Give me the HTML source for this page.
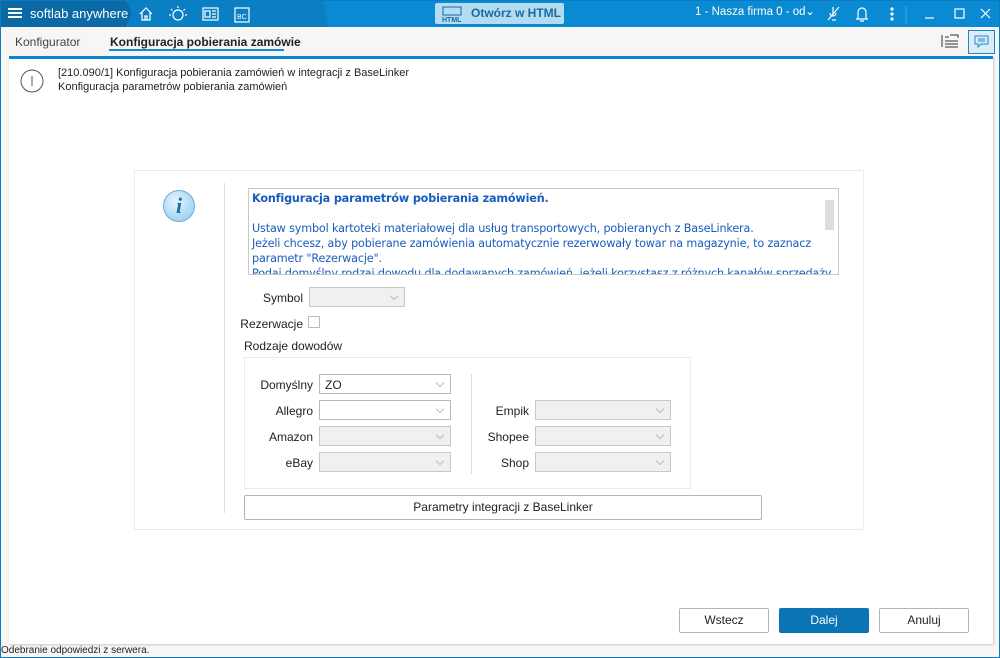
<!DOCTYPE html>
<html><head><meta charset="utf-8"><style>
*{box-sizing:border-box;margin:0;padding:0}
body{width:1000px;height:658px;overflow:hidden;background:#f7f6f4;font-family:"Liberation Sans",sans-serif;font-size:12px;color:#222;position:relative}
.abs{position:absolute}
.top{left:0;top:0;width:1000px;height:27px;background:#0a8ad2}
.topl{left:0;top:0;width:132px;height:27px;background:#0b6aa6;clip-path:polygon(0 0,126px 0,132px 13px,126px 27px,0 27px)}
.topm{left:128px;top:0;width:200px;height:27px;background:#0a7fc4;clip-path:polygon(0 0,195px 0,200px 27px,0 27px)}
.w{color:#fff}
.sel{background:#fff;border:1px solid #b8b8b8;height:20px}
.sel.d{background:#f0f0f0;border-color:#c8c8c8}
.sel:after{content:"";position:absolute;right:7px;top:5px;width:5px;height:5px;border-right:1px solid #bbb;border-bottom:1px solid #bbb;transform:rotate(45deg)}
.lbl{text-align:right;font-size:12px}
.btn{border:1px solid #b5b5b5;background:#fff;border-radius:2px;text-align:center;line-height:23px;font-size:12px}
</style></head><body>
<div class="abs top"></div>
<div class="abs topm"></div>
<div class="abs topl"></div>
<div class="abs" style="left:8px;top:8px;width:14px;height:2px;background:#fff;box-shadow:0 4px 0 #fff,0 8px 0 #fff"></div>
<div class="abs w" style="left:30px;top:6px;font-size:13px">softlab anywhere</div>
<svg class="abs" style="left:138px;top:5px" width="120" height="18" fill="none" stroke="#fff" stroke-width="1.2">
<path d="M2 9 L8 3 L14 9 M4 7 V15 H12 V7 M7 15 V11 H9 V15"/>
<circle cx="40" cy="10" r="5"/><path d="M40 1v2M33 4l1.5 1.5M47 4l-1.5 1.5M31 10h2M47 10h2"/>
<rect x="65" y="3" width="15" height="12"/><rect x="67" y="6" width="5" height="6"/><path d="M74 6h4M74 9h4M74 12h4"/>
<rect x="97" y="3" width="14" height="14"/><text x="99" y="14" font-size="7" fill="#fff" stroke="none" font-family="Liberation Sans">BC</text>
</svg>
<div class="abs" style="left:435px;top:3px;width:129px;height:21px;background:#b3dcf3;border-radius:2px"></div>
<svg class="abs" style="left:441px;top:5px" width="22" height="18" fill="none" stroke="#1a6aa0"><rect x="2" y="2" width="18" height="8"/><text x="1" y="17" font-size="7" fill="#1a6aa0" stroke="none" font-weight="bold" font-family="Liberation Sans">HTML</text></svg>
<div class="abs" style="left:471px;top:6px;color:#1a6aa0;font-size:12px;font-weight:bold">Otwórz w HTML</div>
<div class="abs w" style="left:695px;top:6px;font-size:11.5px">1 - Nasza firma 0 - od</div>
<div class="abs w" style="left:805px;top:4px;font-size:12px">⌄</div>
<svg class="abs" style="left:825px;top:4px" width="170" height="20" fill="none" stroke="#fff" stroke-width="1.2">
<path d="M8 3v8a3 3 0 0 0 0 0M5 9a3 3 0 0 0 6 0M3 16L14 3M7 16h4"/>
<path d="M31 15h12M33 15V8a4 4 0 0 1 8 0v7M35 17h4"/>
<circle cx="67" cy="5" r="1" fill="#fff"/><circle cx="67" cy="10" r="1" fill="#fff"/><circle cx="67" cy="15" r="1" fill="#fff"/>
<path d="M81 2v18" stroke="#3aa0dc"/><path d="M100 14h9"/><rect x="130" y="5" width="9" height="9"/><path d="M156 5l9 9M165 5l-9 9"/>
</svg>
<div class="abs" style="left:15px;top:35px;color:#444">Konfigurator</div>
<div class="abs" style="left:110px;top:35px;font-weight:bold;color:#222">Konfiguracja pobierania zamówie</div>
<div class="abs" style="left:109px;top:49px;width:175px;height:2px;background:#1a86cc"></div>
<svg class="abs" style="left:940px;top:33px" width="20" height="16" fill="none" stroke="#333"><path d="M2 2v12M5 4h4M5 8h13M5 11h13M5 14h13M10 2h8v3"/></svg>
<div class="abs" style="left:968px;top:30px;width:27px;height:24px;border:1px solid #1a86cc;background:#dcedf8"></div>
<svg class="abs" style="left:974px;top:35px" width="16" height="14" fill="none" stroke="#1a86cc"><path d="M1 1h13v8H7l-3 3V9H1z M4 4h7M4 6h7"/></svg>
<div class="abs" style="left:9px;top:56px;width:984px;height:588px;background:#fff;border-top:3px solid #0a86d0;box-shadow:1px 1px 2px #ccc"></div>
<svg class="abs" style="left:19px;top:68px" width="26" height="26" fill="none" stroke="#555"><circle cx="13" cy="13" r="11"/><path d="M13 8v10"/></svg>
<div class="abs" style="left:58px;top:66px;font-size:11px;line-height:14px">[210.090/1] Konfiguracja pobierania zamówień w integracji z BaseLinker<br>Konfiguracja parametrów pobierania zamówień</div>
<div class="abs" style="left:134px;top:170px;width:730px;height:360px;border:1px solid #ebebeb"></div>
<div class="abs" style="left:224px;top:183px;width:1px;height:330px;background:#ddd"></div>
<div class="abs" style="left:163px;top:190px;width:32px;height:32px;border-radius:50%;background:radial-gradient(circle at 40% 35%,#e4f4fd,#8cc8ec);border:1px solid #6aaedc;color:#1d6fa8;font:italic bold 22px 'Liberation Serif',serif;text-align:center;line-height:30px">i</div>
<div class="abs" style="left:248px;top:188px;width:591px;height:87px;border:1px solid #c8c8c8;overflow:hidden;color:#1a5cbc;line-height:15px;padding:2px 3px;font-family:'DejaVu Sans',sans-serif;letter-spacing:-0.15px;font-size:11.2px;white-space:nowrap">
<b>Konfiguracja parametrów pobierania zamówień.</b><br><br>Ustaw symbol kartoteki materiałowej dla usług transportowych, pobieranych z BaseLinkera.<br>Jeżeli chcesz, aby pobierane zamówienia automatycznie rezerwowały towar na magazynie, to zaznacz<br>parametr "Rezerwacje".<br>Podaj domyślny rodzaj dowodu dla dodawanych zamówień, jeżeli korzystasz z różnych kanałów sprzedaży</div>
<div class="abs" style="left:825px;top:200px;width:9px;height:30px;background:#ddd"></div>
<div class="abs lbl" style="left:240px;top:291px;width:63px">Symbol</div>
<div class="abs sel d" style="left:309px;top:287px;width:96px"></div>
<div class="abs lbl" style="left:230px;top:317px;width:73px">Rezerwacje</div>
<div class="abs" style="left:308px;top:316px;width:12px;height:12px;border:1px solid #bbb"></div>
<div class="abs" style="left:244px;top:339px">Rodzaje dowodów</div>
<div class="abs" style="left:244px;top:357px;width:447px;height:132px;border:1px solid #ebebeb"></div>
<div class="abs" style="left:471px;top:374px;width:1px;height:100px;background:#ddd"></div>
<div class="abs lbl" style="left:240px;top:378px;width:73px">Domyślny</div><div class="abs sel" style="left:319px;top:374px;width:132px;padding:3px 5px">ZO</div>
<div class="abs lbl" style="left:240px;top:404px;width:73px">Allegro</div><div class="abs sel" style="left:319px;top:400px;width:132px"></div>
<div class="abs lbl" style="left:240px;top:430px;width:73px">Amazon</div><div class="abs sel d" style="left:319px;top:426px;width:132px"></div>
<div class="abs lbl" style="left:240px;top:456px;width:73px">eBay</div><div class="abs sel d" style="left:319px;top:452px;width:132px"></div>
<div class="abs lbl" style="left:460px;top:404px;width:69px">Empik</div><div class="abs sel d" style="left:535px;top:400px;width:136px"></div>
<div class="abs lbl" style="left:460px;top:430px;width:69px">Shopee</div><div class="abs sel d" style="left:535px;top:426px;width:136px"></div>
<div class="abs lbl" style="left:460px;top:456px;width:69px">Shop</div><div class="abs sel d" style="left:535px;top:452px;width:136px"></div>
<div class="abs btn" style="left:244px;top:495px;width:518px;height:25px">Parametry integracji z BaseLinker</div>
<div class="abs btn" style="left:679px;top:608px;width:90px;height:25px">Wstecz</div>
<div class="abs btn" style="left:779px;top:608px;width:90px;height:25px;background:#0a74b4;border-color:#0a74b4;color:#fff">Dalej</div>
<div class="abs btn" style="left:879px;top:608px;width:90px;height:25px">Anuluj</div>
<div class="abs" style="left:1px;top:645px;font-size:10px;color:#222">Odebranie odpowiedzi z serwera.</div>
<div class="abs" style="left:0;top:0;width:1000px;height:658px;border:1px solid #0a7cc4;pointer-events:none"></div>
</body></html>
